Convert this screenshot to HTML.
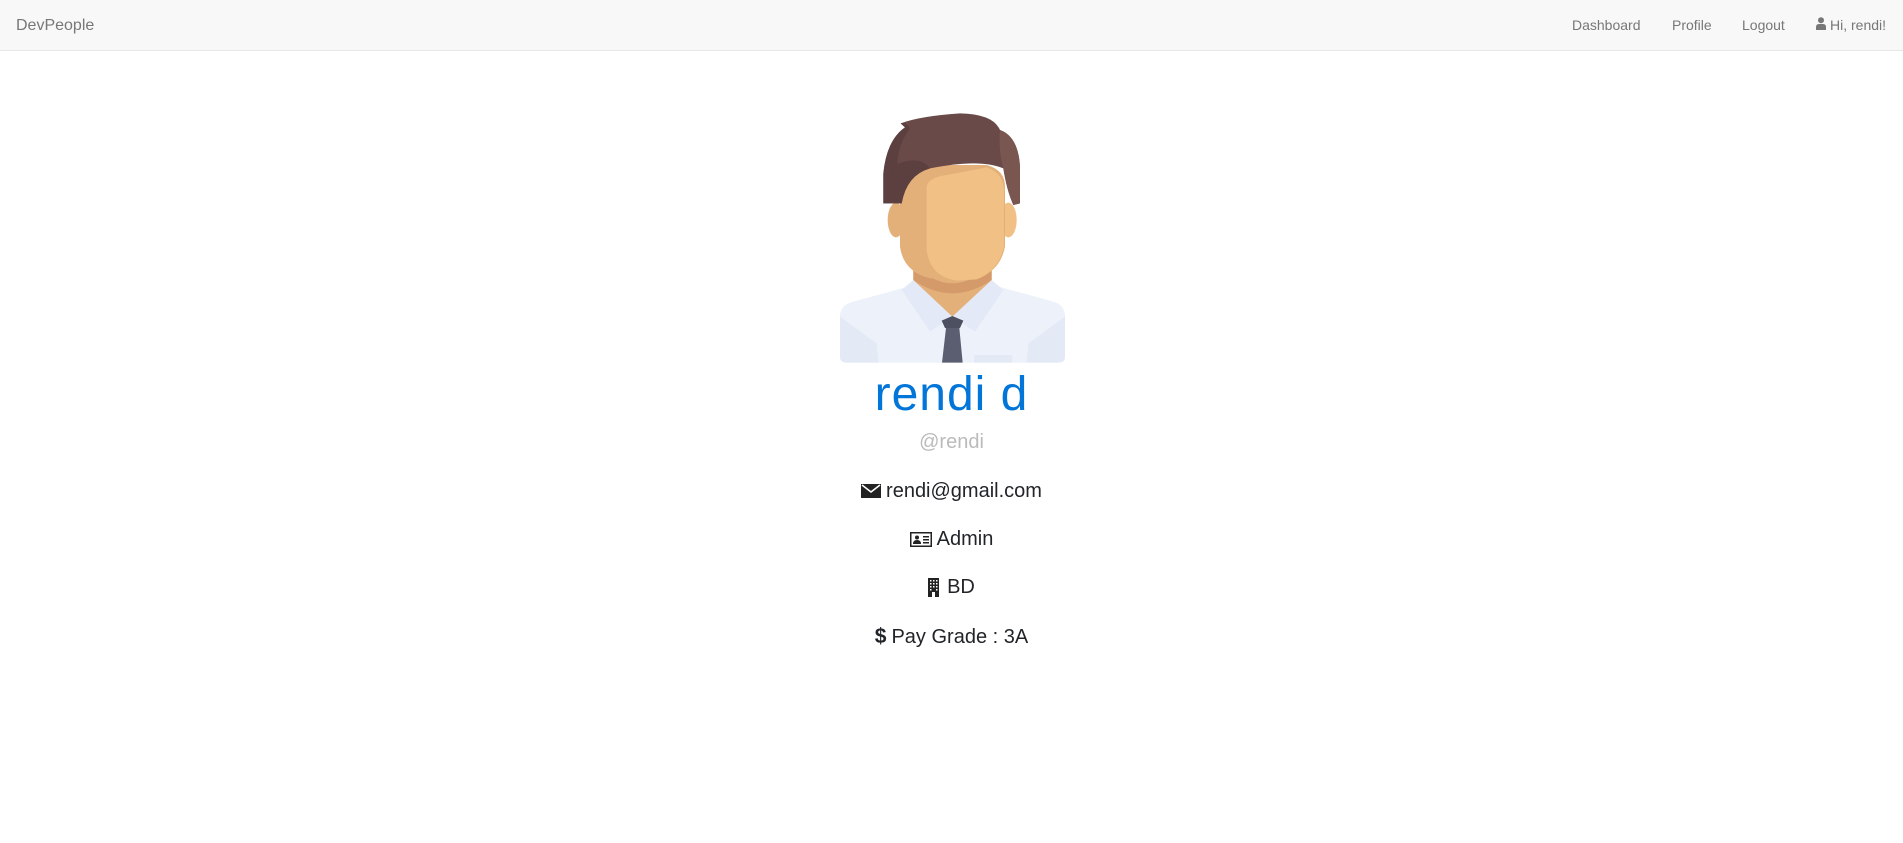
<!DOCTYPE html>
<html><head><meta charset="utf-8"><style>
*{margin:0;padding:0;box-sizing:border-box}
body{width:1903px;height:843px;background:#fff;font-family:"Liberation Sans",sans-serif;position:relative;overflow:hidden}
.nav{position:absolute;left:0;top:0;width:1903px;height:51px;background:#f8f8f8;border-bottom:1px solid #e7e7e7}
.t{position:absolute;white-space:nowrap;line-height:20px}
.nv{font-size:14px;color:#777;top:15px}
.row{position:absolute;left:0;width:1903px;display:flex;justify-content:center;align-items:center;gap:5px;font-size:20px;color:#212529;line-height:20px;height:20px}
</style></head><body>
<div class="nav">
<div class="t" style="left:16px;top:16px;font-size:16px;color:#777">DevPeople</div>
<div class="t nv" style="left:1572px">Dashboard</div>
<div class="t nv" style="left:1672px">Profile</div>
<div class="t nv" style="left:1742px">Logout</div>
<svg style="position:absolute;left:1816px;top:17px" width="10" height="13" viewBox="0 0 10 13"><circle cx="5" cy="3.3" r="3" fill="#777"/><path d="M0,13 L0,10 Q0,7 3,7 L7,7 Q10,7 10,10 L10,13Z" fill="#777"/></svg>
<div class="t nv" style="left:1830px">Hi, rendi!</div>
</div>

<svg style="position:absolute;left:820px;top:90px" width="260" height="290" viewBox="0 0 780 870">
<path d="M60,680 Q60,645 100,635 L300,580 L500,580 L700,635 Q735,645 735,680 L735,800 Q735,818 715,818 L80,818 Q60,818 60,800 Z" fill="#edf1fa"/>
<path d="M60,680 L170,760 L175,818 L80,818 Q60,818 60,800Z" fill="#e3e9f5"/>
<path d="M735,680 L625,760 L620,818 L715,818 Q735,818 735,800Z" fill="#e3e9f5"/>
<rect x="462" y="795" width="115" height="23" fill="#e3e9f5"/>
<path d="M280,480 L515,480 L515,590 L397,680 L280,590 Z" fill="#e4b07a"/>
<path d="M280,520 Q397,640 515,520 L515,570 Q397,650 280,570Z" fill="#d49a6a"/>
<path d="M245,600 L280,570 L397,680 L330,725 Z" fill="#e3e9f6"/>
<path d="M550,600 L515,570 L397,680 L465,725Z" fill="#e3e9f6"/>
<path d="M365,692 L397,678 L430,692 L420,714 L375,714Z" fill="#4d5060"/>
<path d="M378,714 L418,714 L428,818 L366,818Z" fill="#5b5e70"/>
<ellipse cx="228" cy="390" rx="25" ry="52" fill="#e4b07a"/>
<ellipse cx="565" cy="390" rx="25" ry="52" fill="#f0c085"/>
<path d="M240,290 Q240,240 300,225 L500,225 Q555,240 555,290 L555,470 Q540,545 470,565 L330,565 Q250,545 240,470 Z" fill="#e4b07a"/>
<path d="M320,290 Q325,262 380,255 L500,232 Q550,250 552,300 L552,470 Q535,545 470,568 L410,572 Q330,560 320,480Z" fill="#f0c085"/>
<path d="M190,250 Q200,150 255,112 L242,100 Q300,78 420,70 Q520,72 540,120 Q595,140 600,230 L600,340 L580,345 Q560,300 550,235 Q480,205 330,235 Q260,255 245,340 L190,340 Z" fill="#6a4a48"/>
<path d="M190,250 Q200,150 255,112 L242,100 Q260,95 270,115 Q235,160 232,222 Q300,195 330,235 Q260,255 245,340 L190,340Z" fill="#5c3f3f"/>
<path d="M540,120 Q595,140 600,230 L600,340 L580,345 Q560,300 550,235 Q535,180 540,120Z" fill="#7a5650"/>
</svg>

<div class="t" style="left:0;width:1903px;text-align:center;top:371px;font-size:48px;line-height:48px;color:#0275d8;letter-spacing:1px">rendi d</div>
<div class="t" style="left:0;width:1903px;text-align:center;top:432px;font-size:20px;color:#bbb">@rendi</div>

<div class="row" style="top:481px"><svg width="20" height="14" viewBox="0 0 20 14"><rect width="20" height="14" fill="#222"/><path d="M1,1 L10,8 L19,1" stroke="#fff" stroke-width="1.6" fill="none"/></svg><span>rendi@gmail.com</span></div>
<div class="row" style="top:529px"><svg width="22" height="15" viewBox="0 0 22 15"><rect x="0.75" y="0.75" width="20.5" height="13.5" fill="none" stroke="#222" stroke-width="1.5"/><circle cx="7" cy="5.5" r="2" fill="#222"/><path d="M3,12 Q3,8 7,8 Q11,8 11,12Z" fill="#222"/><rect x="13" y="4" width="6" height="1.5" fill="#222"/><rect x="13" y="7" width="6" height="1.5" fill="#222"/><rect x="13" y="10" width="6" height="1.5" fill="#222"/></svg><span>Admin</span></div>
<div class="row" style="top:577px;gap:8px"><svg width="11" height="19" viewBox="0 0 11 19"><rect width="11" height="19" fill="#222"/><g fill="#fff"><rect x="2" y="2" width="1.5" height="1.5"/><rect x="5" y="2" width="1.5" height="1.5"/><rect x="8" y="2" width="1.5" height="1.5"/><rect x="2" y="5" width="1.5" height="1.5"/><rect x="5" y="5" width="1.5" height="1.5"/><rect x="8" y="5" width="1.5" height="1.5"/><rect x="2" y="8" width="1.5" height="1.5"/><rect x="5" y="8" width="1.5" height="1.5"/><rect x="8" y="8" width="1.5" height="1.5"/><rect x="2" y="11" width="1.5" height="1.5"/><rect x="8" y="11" width="1.5" height="1.5"/><rect x="4" y="14" width="3" height="5"/></g></svg><span>BD</span></div>
<div class="row" style="top:627px"><span style="font-weight:bold;font-size:21px">$</span><span>Pay Grade : 3A</span></div>
</body></html>
